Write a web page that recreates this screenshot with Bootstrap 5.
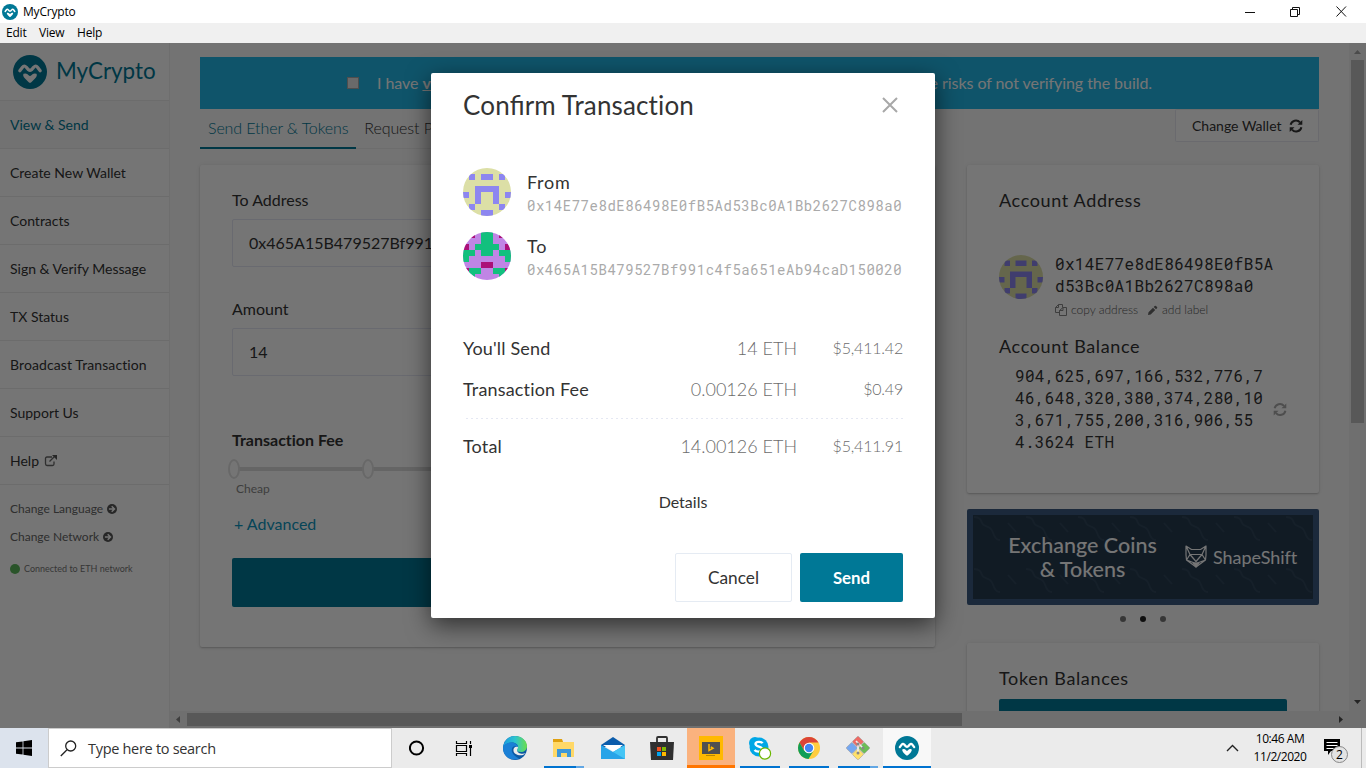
<!DOCTYPE html>
<html lang="en">
<head>
<meta charset="utf-8">
<meta name="viewport" content="width=device-width, initial-scale=1">
<title>MyCrypto</title>
<link rel="stylesheet" href="https://cdn.jsdelivr.net/npm/bootstrap@5.3.0/dist/css/bootstrap.min.css">
<style>
html,body{height:100%;overflow:hidden}
body{font-family:Lato,sans-serif;color:#333;font-size:16px;line-height:20px;font-variant-ligatures:none}
svg{display:block;flex:none}
.lig{font-variant-ligatures:normal;letter-spacing:0}
.win-font{font-family:"Open Sans",sans-serif;color:#000}
.title-bar{height:23px;font-size:12px;letter-spacing:-.2px}
.menu-bar{height:20px;background:#f0f0f0;font-size:12px;letter-spacing:-.2px}
.app-area{height:685px}
.side{width:170px;border-right:1px solid #efefef;background:#fff}
.brand-box{height:58px;border-bottom:1px solid #ececec;color:#007896}
.brand-name{font-size:22.4px;letter-spacing:0;margin-top:-2px}
.side-item{height:48px;border-bottom:1px solid #ececec;font-size:14px;padding-left:10px}
.side-item.on{background:#f8f8f8;color:#007896}
.side-small{font-size:12px;color:#666;height:28px;padding-left:10px}
.side-status{font-size:9px;color:#777;padding-left:10px;height:36px}
.main-zone{background:#fafafa}
.scroll-body{height:668px;padding:14px 30px 0}
.notice{height:52px;background:#21b8e8;color:#fff;padding:0 167px 0 147px;letter-spacing:-.06px}
.box-tick{width:12px;height:12px;background:#e8e8e8;border:1px solid #aaa;margin-right:18px}
.tab-row{width:735px;height:40px;font-weight:300;border-bottom:1px solid #eee}
.tab-link{height:40px;padding:9px 8px 0;letter-spacing:-.1px}
.tab-link.on{border-bottom:2px solid #007896;color:#007896}
.swap-btn{width:144px;height:33px;border:1px solid #e6e8ef;border-top-color:#eee;background:#fff;border-radius:2px;font-size:14px;color:#333}
.panel{background:#fff;border-radius:2px;box-shadow:0 1px 2px rgba(0,0,0,.22),0 0 5px rgba(0,0,0,.05)}
.form-panel{width:735px;height:482px;padding:25px 32px 0}
.side-panel{width:352px}
.inp{height:48px;border:1px solid #e5e8f3;border-radius:2px;padding-left:16px}
.track{height:4px;background:#ddd;width:600px;margin-left:6px}
.knob{width:12px;height:20px;border:2px solid #e3e3e3;border-radius:50%;background:#fff;position:absolute;top:-8px}
.big-btn{height:49px;background:#007896;border-radius:2px}
.h-side{font-size:18px;letter-spacing:.64px;line-height:22px;font-weight:400}
.mono{font-family:"Roboto Mono","Liberation Mono",monospace}
.promo{height:96px;border:6px solid #3b5982;border-radius:2px;background:#253b50;color:#fff;position:relative}
.promo-h{font-size:21.5px;line-height:24px;font-weight:500}
.dotty{width:6px;height:6px;border-radius:50%;background:#777}
.vbar{width:17px;background:#f1f1f1;height:668px}
.hbar{height:17px;background:#f1f1f1}
.thumb{background:#c1c1c1}
.shade{position:absolute;inset:0;background:rgba(0,0,0,.54)}
.dialog{width:504px;height:545px;margin:30px 0 0 431px;background:#fff;border-radius:2px;padding:0 32px;box-shadow:0 7px 24px rgba(0,0,0,.6)}
.dialog-h{font-size:26px;line-height:64px;font-weight:400;margin:0;letter-spacing:.14px}
.addr{font-size:14px;letter-spacing:.53px;color:#aaa;line-height:20px;margin-top:3px}
.who{font-size:18px;line-height:22px;padding-top:3px;letter-spacing:.7px}
.sum{font-size:18px;line-height:24px}
.sum-label{letter-spacing:.17px}
.amt{width:208px;text-align:right;color:#6c6c6c;font-weight:300}
.usd{width:106px;text-align:right;color:#6c6c6c;font-weight:300;font-size:16px;letter-spacing:-.2px}
.dash{height:1px;margin-left:3px;background:repeating-linear-gradient(90deg,#e5e8f3 0 2px,transparent 2px 5px)}
.b-cancel,.b-send{height:49px;border-radius:2px;padding:1px 0 0}
.b-cancel{width:117px;border:1px solid #e5ebf3;color:#333;font-size:17.3px}
.b-send{width:103px;background:#007896;color:#fff;font-weight:700;font-size:16.8px}
.task-bar{height:40px;background:#ebebeb;position:relative}
.start{width:48px;background:#dce3ed}
.search{width:344px;background:#fff;border:1px solid #ccc;font-size:14.5px;color:#333;letter-spacing:-.3px}
.cell{width:48px;height:40px;display:flex;align-items:center;justify-content:center;border-bottom:3px solid transparent;padding-top:3px}
.run{position:relative}
.run::after{content:"";position:absolute;left:4px;right:4px;bottom:-3px;height:2px;background:#0073d0}
.stack::after{background:linear-gradient(90deg,#0073d0 80%,#62a7e4 80%)}
.active-run::after{left:0;right:0}
.clock{font-size:12px;line-height:18px;letter-spacing:-.45px;width:60px}
</style>
</head>
<body class="d-flex flex-column bg-white">
<svg width="0" height="0" class="position-absolute">
<defs>
<symbol id="mc" viewBox="0 0 34 34"><circle cx="17" cy="17" r="17" fill="#007896"/><path d="M6.800 15.800 9.500 12.200Q11.300 9.800 13.200 12.200L15.600 14.800Q17 16 18.400 14.800L20.800 12.200Q22.700 9.800 24.500 12.200L27.200 15.800" fill="none" stroke="#fff" stroke-width="3.200" stroke-linecap="round" stroke-linejoin="round"/><path d="M10.500 18.800Q13.700 17.500 15.600 20.200Q17 21.800 18.400 20.200Q20.300 17.500 23.500 18.800Q24.600 21 22 23.600L18.300 27.200Q17 28.400 15.700 27.200L12 23.600Q9.400 21 10.500 18.800z" fill="#fff"/></symbol>
<symbol id="idA" viewBox="0 0 8 8"><g clip-path="url(#round)"><path fill="#dcdfa6" d="M0 0h8v8H0z"/><path fill="#8d86f0" d="M1 1h1v1H1zM3 1h2v1H3zM6 1h1v1H6zM2 3h4v3H5V4H3v2H2zM0 4h1v1H0zM7 4h1v1H7zM1 6h1v1H1zM6 6h1v1H6zM3 7h2v1H3z"/></g></symbol>
<symbol id="idB" viewBox="0 0 8 8"><g clip-path="url(#round)"><path fill="#c085e5" d="M0 0h8v8H0z"/><path fill="#12c07e" d="M3 0h2v2h1v1h2v2H7V4H6V3H5v1H3V3H2v1H1v1H0V3h2V2h1zM1 6h2v1H2v1H1zM5 6h2v2H6V7H5z"/><path fill="#ab1078" d="M1 0h1v1H1zM6 0h1v1H6zM0 2h1v1H0zM7 2h1v1H7zM3 5h2v1H3zM0 6h1v1H0zM7 6h1v1H7z"/></g></symbol>
<clipPath id="round"><circle cx="4" cy="4" r="4"/></clipPath>
<symbol id="sync" viewBox="0 0 14 14"><g fill="none" stroke="currentColor" stroke-width="2"><path d="M1.600 5.800A5.400 5.400 0 0 1 11 3.400M12.400 8.200A5.400 5.400 0 0 1 3 10.600"/></g><path fill="currentColor" d="M13.300 1v4.800H8.500zM.7 13V8.200h4.800z"/></symbol>
<symbol id="arrow" viewBox="0 0 10 10"><circle cx="5" cy="5" r="5" fill="#555"/><path d="M1.900 5H7M4.700 2.200 7.500 5 4.700 7.800" fill="none" stroke="#fff" stroke-width="1.500"/></symbol>
</defs></svg>

<header class="title-bar win-font d-flex align-items-center flex-shrink-0">
  <svg width="16" height="16" style="margin-left:2px"><use href="#mc"/></svg>
  <span style="margin-left:5px">MyCrypto</span>
  <svg class="ms-auto" width="126" height="22" viewBox="1240 0 126 22" fill="none" stroke="#111"><path d="M1245 11.5h10M1290.500 8.500h7v7h-7zM1292.500 8v-1.500h7v7h-1.500M1336.500 5.500l9.500 10M1346 5.500l-9.500 10"/></svg>
</header>
<nav class="menu-bar win-font d-flex align-items-center flex-shrink-0"><span style="margin-left:6px;width:33px">Edit</span><span style="width:38px">View</span><span>Help</span></nav>

<main class="app-area d-flex flex-shrink-0 position-relative overflow-hidden">
  <aside class="side flex-shrink-0">
    <div class="brand-box d-flex align-items-center"><svg width="34" height="34" style="margin-left:13px;margin-right:9px;margin-top:1px"><use href="#mc"/></svg><span class="brand-name">MyCrypto</span></div>
    <div class="side-item on d-flex align-items-center">View &amp; Send</div>
    <div class="side-item d-flex align-items-center">Create New Wallet</div>
    <div class="side-item d-flex align-items-center">Contracts</div>
    <div class="side-item d-flex align-items-center">Sign &amp; Verify Message</div>
    <div class="side-item d-flex align-items-center">TX Status</div>
    <div class="side-item d-flex align-items-center" style="letter-spacing:.1px">Broadcast Transaction</div>
    <div class="side-item d-flex align-items-center">Support Us</div>
    <div class="side-item d-flex align-items-center">Help <svg width="14" height="13" style="margin-left:5px" viewBox="0 0 14 13" fill="none" stroke="#666" stroke-width="1.3"><path d="M8 3H3Q1.500 3 1.500 4.500v5Q1.500 11.500 3 11.500h5.500q1.500 0 1.500-1.500V7.500M5.500 7.500 11 2"/><path d="M8 1h5v5z" fill="#555" stroke="none"/></svg></div>
    <div class="side-small d-flex align-items-center" style="margin-top:10px">Change Language<svg class="ms-1" width="10" height="10"><use href="#arrow"/></svg></div>
    <div class="side-small d-flex align-items-center">Change Network<svg class="ms-1" width="10" height="10"><use href="#arrow"/></svg></div>
    <div class="side-status d-flex align-items-center"><svg width="10" height="10" class="me-1"><circle cx="5" cy="5" r="5" fill="#5cb85c"/></svg>Connected to ETH network</div>
  </aside>
  <section class="main-zone flex-grow-1 d-flex flex-column">
    <div class="d-flex">
      <div class="scroll-body flex-grow-1 overflow-hidden">
        <div class="notice d-flex align-items-center"><span class="box-tick"></span><span>I have <b><u>verified</u></b></span><span class="ms-auto">the risks of not verifying the build.</span></div>
        <div class="d-flex justify-content-between" style="height:56px">
          <div class="tab-row d-flex"><span class="tab-link on">Send Ether &amp; Tokens</span><span class="tab-link">Request Payment</span></div>
          <div class="swap-btn d-flex align-items-center ps-3">Change Wallet<svg width="14" height="14" style="margin-left:7px"><use href="#sync"/></svg></div>
        </div>
        <div class="d-flex justify-content-between align-items-start">
          <div class="panel form-panel">
            <div>To Address</div>
            <div class="inp d-flex align-items-center" style="margin-top:9px">0x465A15B479527Bf991c4f5</div>
            <div style="margin-top:32px">Amount</div>
            <div class="inp d-flex align-items-center" style="margin-top:9px">14</div>
            <div class="fw-bold" style="margin-top:54px">Transaction Fee</div>
            <div class="track position-relative" style="margin-top:17px"><span class="knob" style="left:-10px"></span><span class="knob" style="left:124px"></span></div>
            <div style="font-size:12px;color:#888;margin:8px 0 0 4px">Cheap</div>
            <div style="color:#0e97c0;margin:15px 0 0 2px">+ Advanced</div>
            <div class="big-btn" style="margin-top:24px"></div>
          </div>
          <div class="side-panel">
            <div class="panel" style="height:328px;padding:24px 32px 0">
              <h2 class="h-side m-0">Account Address</h2>
              <div class="d-flex" style="margin-top:43px">
                <svg width="44" height="44" style="margin-top:1px"><use href="#idA"/></svg>
                <div style="margin-left:12px;width:224px">
                  <div class="mono" style="line-height:22px;letter-spacing:.33px;margin-top:-1px">0x14E77e8dE86498E0fB5A<br>d53Bc0A1Bb2627C898a0</div>
                  <div class="d-flex align-items-center" style="font-size:12px;font-weight:300;color:#555;margin-top:3px;line-height:20px">
                    <svg width="12" height="12" viewBox="0 0 12 12" fill="none" stroke="#888"><path d="M3.500.5h4v3M3.500.5l-3 3v5h4M3.500.5v3h-3M8 3.500h3.500v8h-7v-5zM8 3.500v3H4.500"/></svg><span style="margin-left:4px;width:91px">copy address</span>
                    <span style="margin-right:4px;margin-left:-15px"><svg width="11" height="11" viewBox="0 0 11 11"><path d="M1 10 1.500 7.300 6 2.800 8.200 5 3.700 9.500zM6.700 2.100 7.700 1Q8.400.4 9 1l1 1q.7.7 0 1.300L9 4.300z" fill="#666"/></svg></span><span>add label</span>
                  </div>
                </div>
              </div>
              <h2 class="h-side" style="margin:15px 0 8px">Account Balance</h2>
              <div class="d-flex align-items-center" style="padding-left:16px"><div class="mono" style="line-height:22px;letter-spacing:.33px;width:258px">904,625,697,166,532,776,7<br>46,648,320,380,374,280,10<br>3,671,755,200,316,906,55<br>4.3624 ETH</div><svg width="14" height="15" style="color:#aaa"><use href="#sync"/></svg></div>
            </div>
            <div class="promo d-flex align-items-center" style="margin-top:16px">
              <svg class="position-absolute top-0 start-0" width="340" height="84"><defs><pattern id="wave" width="52" height="52" patternUnits="userSpaceOnUse"><path d="M1 2c6 0 7 3 8 6s5 3 8 5 3 6 5 9 3 3 5 3M35 8l8 9" fill="none" stroke="#30465b" stroke-width="1.800"/></pattern></defs><rect width="340" height="84" fill="url(#wave)"/></svg>
              <div class="promo-h text-center position-relative" style="width:219px">Exchange Coins<br>&amp; Tokens</div>
              <svg class="position-relative" style="margin-left:-7px;margin-top:-1px" width="22" height="23" viewBox="0 0 22 23" fill="none" stroke="#fff" stroke-width="1.200" stroke-linejoin="round"><path d="M1 1 6.500 4.500h9L21 1v9L20.500 15 11 22 1.500 15 1 10zM1.500 2 5 9.500 1.500 15 11 18.500 20.500 15 17 9.500 20.500 2M5 9.500h12M5 9.500l6 7 6-7"/><path d="M8 18h6l-3 4z" fill="#fff"/></svg>
              <span class="position-relative" style="margin-left:6px;font-size:18px;letter-spacing:-.05px">ShapeShift</span>
            </div>
            <div class="d-flex justify-content-center align-items-center" style="height:28px;gap:14px"><span class="dotty"></span><span class="dotty" style="background:#222"></span><span class="dotty"></span></div>
            <div class="panel" style="height:110px;padding:24px 32px 0;margin-top:10px"><h2 class="h-side" style="margin:0 0 10px">Token Balances</h2><div class="big-btn"></div></div>
          </div>
        </div>
      </div>
      <div class="vbar flex-shrink-0 d-flex flex-column align-items-center"><svg width="17" height="17"><path d="M5 11 8.500 7 12 11z" fill="#a3a3a3"/></svg><div class="thumb" style="width:13px;height:363px"></div><svg class="mt-auto" width="17" height="17"><path d="M5 6h7l-3.500 4z" fill="#505050"/></svg></div>
    </div>
    <div class="hbar d-flex align-items-center"><svg width="17" height="17"><path d="M10 5v7L6 8.500z" fill="#888"/></svg><div class="thumb" style="width:775px;height:13px"></div><svg class="ms-auto" width="17" height="17"><path d="M7 5v7l4-3.500z" fill="#505050"/></svg><div style="width:17px"></div></div>
  </section>

  <div class="shade">
    <div class="dialog" role="dialog">
      <div class="d-flex justify-content-between align-items-center"><h1 class="dialog-h">Con<span class="lig">fi</span>rm Transaction</h1><svg width="16" height="16" style="margin-right:5px" stroke="#a8a8a8" stroke-width="2"><path d="M1 1l14 14M15 1 1 15"/></svg></div>
      <div class="d-flex" style="margin-top:31px;height:64px"><svg width="48" height="48"><use href="#idA"/></svg><div style="margin-left:16px"><div class="who">From</div><div class="addr mono">0x14E77e8dE86498E0fB5Ad53Bc0A1Bb2627C898a0</div></div></div>
      <div class="d-flex" style="height:64px"><svg width="48" height="48"><use href="#idB"/></svg><div style="margin-left:16px"><div class="who">To</div><div class="addr mono">0x465A15B479527Bf991c4f5a651eAb94caD150020</div></div></div>
      <div class="sum d-flex" style="margin-top:40px"><span class="me-auto sum-label">You'll Send</span><span class="amt">14 ETH</span><span class="usd">$5,411.42</span></div>
      <div class="sum d-flex" style="margin-top:17px"><span class="me-auto sum-label">Transaction Fee</span><span class="amt">0.00126 ETH</span><span class="usd">$0.49</span></div>
      <div class="dash" style="margin-top:17px"></div>
      <div class="sum d-flex" style="margin-top:15px"><span class="me-auto sum-label">Total</span><span class="amt">14.00126 ETH</span><span class="usd">$5,411.91</span></div>
      <div class="text-center" style="margin-top:34px">Details</div>
      <div class="d-flex justify-content-end gap-2" style="margin-top:41px"><button class="btn b-cancel">Cancel</button><button class="btn b-send">Send</button></div>
    </div>
  </div>
</main>

<footer class="task-bar win-font d-flex flex-shrink-0">
  <div class="start d-flex align-items-center justify-content-center"><svg width="16" height="16"><path d="M0 2.300 6.600 1.400V7.600H0zM7.400 1.300 16 0v7.600H7.400zM0 8.400h6.600v6.200L0 13.700zM7.400 8.400H16V16l-8.600-1.300z"/></svg></div>
  <div class="search d-flex align-items-center"><svg width="17" height="17" style="margin-left:11px;margin-right:11px" fill="none" stroke="#222" stroke-width="1.300"><circle cx="10.700" cy="6" r="5"/><path d="M7 9.700.8 16"/></svg><span style="margin-top:2px">Type here to search</span></div>
  <div class="d-flex" style="gap:1px;margin-left:1px">
    <div class="cell"><svg width="16" height="16"><circle cx="7.500" cy="8" r="6.600" fill="none" stroke="#000" stroke-width="2"/></svg></div>
    <div class="cell"><svg width="18" height="17" style="margin-left:-4px" fill="none" stroke="#000" stroke-width="1.200"><path d="M1.500 1v2.500h10V1M1.500 5.500h10v6h-10zM1.500 16v-2.500h10V16M15.500 1v3M15.500 8v8"/><path d="M14 5h3v3h-3z" fill="#000" stroke="none"/></svg></div>
    <div class="cell"><svg width="24" height="24" viewBox="0 0 24 24"><defs><linearGradient id="eg"><stop stop-color="#1a9ae0"/><stop offset=".5" stop-color="#2dc4cf"/><stop offset="1" stop-color="#6ade4b"/></linearGradient></defs><circle cx="12" cy="12" r="12" fill="#0c59a4"/><path d="M0 12C1 4 6 0 12 0c7 0 12 5 12 10 0 4-3 6-6 6-3 0-4-1-4-2 0-1 1-1 1-3 0-3-3-4.500-6-4.500C4 6.500 1 9 0 12z" fill="url(#eg)"/><path d="M0 12c1-4 5-5.500 8-5.500 5 0 7 3 7 4.500-5-2-7 1-6 5 1 3 4 5 7 6.500C8 26 0 20 0 12z" fill="#1b80d6"/><path d="M15 11c-3-1-5 1-4.500 4 .7 3 4.500 5 9.500 4l3-2c-4 2-9 0-9-3 0-1 1-1 1-3z" fill="#ebebeb"/></svg></div>
    <div class="cell run stack"><svg width="22" height="19"><path d="M0 1h9l1 2h11v15H0z" fill="#ffd867"/><path d="M0 0h9l1 3H0z" fill="#dfa010"/><path d="M4 18v-8h14v8h-4v-4H8v4z" fill="#3d97d8"/></svg></div>
    <div class="cell"><svg width="24" height="22"><path d="M0 8 12 0l12 8v2H0z" fill="#0b5cab"/><path d="M2 8h20l-9 7z" fill="#fff"/><path d="M0 8l12 7 12-7v14H0z" fill="#28a4e8"/><path d="M12 15 24 8v14z" fill="#45c5f5"/></svg></div>
    <div class="cell"><svg width="24" height="24"><path d="M0 6h24l-1 18H1z" fill="#303030"/><path d="M7 9V2q0-1 1-1h8q1 0 1 1v7" fill="none" stroke="#303030" stroke-width="1.800"/><path fill="#f25022" d="M7 11h4v4H7z"/><path fill="#7fba00" d="M12 11h4v4h-4z"/><path fill="#00a4ef" d="M7 16h4v4H7z"/><path fill="#ffb900" d="M12 16h4v4h-4z"/></svg></div>
    <div class="cell" style="background:#fab27e;border-color:#ff7500"><svg width="24" height="24"><path d="M0 0h24v24H0z" fill="#ffb900"/><path d="M3 6h18v12H3z" fill="#505050"/><path d="M7 19h9v1H7z" fill="#b88700"/><path d="M10 8v6.500l4-2.300-2.200-1.200" fill="none" stroke="#ffb900" stroke-width="1.500"/></svg></div>
    <div class="cell run"><svg width="24" height="24"><circle cx="7" cy="7" r="6" fill="#00a7e6"/><circle cx="11" cy="11" r="9.500" fill="#00a7e6"/><path d="M14.500 7.300c-1-2-7-2-7 .8 0 3 7 2 7 5.200 0 3-6 3-8 .7" fill="none" stroke="#fff" stroke-width="2.400"/><circle cx="17" cy="17.500" r="5.600" fill="#fff" stroke="#6bb700" stroke-width="1.200"/></svg></div>
    <div class="cell run"><svg width="22" height="22" viewBox="0 0 22 22"><circle cx="11" cy="11" r="11" fill="#ffcd40"/><path d="M1.500 5.500A11 11 0 0 1 20.500 5.500H11L6.200 13.800z" fill="#db4437"/><path d="M1.500 5.500A11 11 0 0 0 10.500 22L15.500 13.800 6.200 13.800z" fill="#0f9d58"/><circle cx="11" cy="11" r="5.300" fill="#fff"/><circle cx="11" cy="11" r="4.200" fill="#4285f4"/></svg></div>
    <div class="cell run stack"><svg width="24" height="24" viewBox="0 0 24 24"><g transform="rotate(45 12 12)" stroke="#999" stroke-width=".5"><rect x="3.500" y="3.500" width="8.200" height="8.200" rx="1" fill="#ef6a64"/><rect x="12.300" y="3.500" width="8.200" height="8.200" rx="1" fill="#6cbe56"/><rect x="3.500" y="12.300" width="8.200" height="8.200" rx="1" fill="#75a7f0"/><rect x="12.300" y="12.300" width="8.200" height="8.200" rx="1" fill="#ffe16b"/></g><path d="M12 7v10M10 5l7 7" stroke="#eee" stroke-width="1.600"/><circle cx="12" cy="17" r="1.500" fill="#888"/><circle cx="17" cy="12" r="1.500" fill="#888"/><circle cx="12" cy="8" r="1.500" fill="#888"/></svg></div>
    <div class="cell run active-run" style="background:#f8f8f8"><svg width="24" height="24"><use href="#mc"/></svg></div>
  </div>
  <div class="ms-auto d-flex align-items-center">
    <svg width="13" height="8" style="margin-right:11px"><path d="M1 7l5.500-5.500L12 7" fill="none" stroke="#222" stroke-width="1.400"/></svg>
    <div class="clock text-center">10:46 AM<br>11/2/2020</div>
    <svg width="24" height="25" style="margin-left:14px;margin-right:13px;margin-top:6px"><path d="M0 0h16v12H7l-3 4v-4H0z"/><path d="M2.500 3.500h11M2.500 6.500h11M2.500 9.500h7" stroke="#fff"/><circle cx="15.500" cy="15.500" r="8" fill="#e3e3e3" stroke="#888"/><text x="15.500" y="20" text-anchor="middle" font-size="12">2</text></svg>
    <div style="width:1px;height:40px;background:#bbb;margin-right:4px"></div>
  </div>
</footer>
<script src="https://cdn.jsdelivr.net/npm/bootstrap@5.3.0/dist/js/bootstrap.bundle.min.js"></script>
</body>
</html>
